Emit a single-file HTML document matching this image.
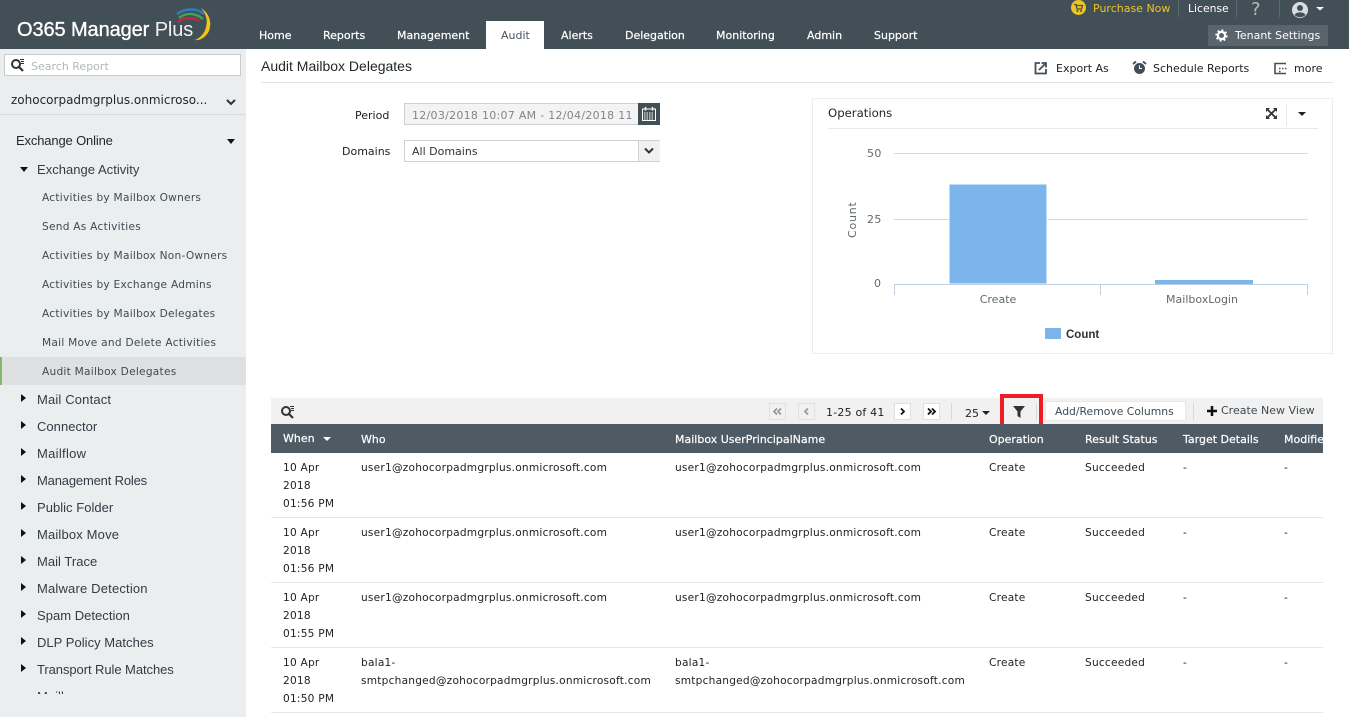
<!DOCTYPE html>
<html><head><meta charset="utf-8"><style>
html,body{margin:0;padding:0;width:1349px;height:717px;overflow:hidden;background:#fff}
body{position:relative;font-family:"DejaVu Sans",sans-serif;font-size:11px;color:#222}
.a,.t{position:absolute;white-space:nowrap}
.t{line-height:14px}
.n{color:#fff;font-size:11px;top:29px;-webkit-text-stroke:.2px #fff}
.s{color:#3f4a52;font-size:10.6px;left:42px;letter-spacing:.25px;margin-top:1px}
.m{font-family:"Liberation Sans",sans-serif;font-size:13px;letter-spacing:.03px;color:#333b44;left:37px;margin-top:1px}
.h{color:#fff;font-size:11px;top:432px;-webkit-text-stroke:.2px #fff;margin-top:1px}
.c{color:#222;font-size:10.6px;letter-spacing:.22px;margin-top:1px}
.l{position:absolute;left:271px;width:1052px;height:1px;background:#e6e8e8}
.ar{position:absolute;left:21px;width:0;height:0;border-left:5px solid #111;border-top:4.5px solid transparent;border-bottom:4.5px solid transparent}
.pg{position:absolute;top:403px;width:15px;height:15px;border:1px solid #e0e0e0;background:#fff}
.pg svg{position:absolute;left:2px;top:2px}
</style></head><body>
<div class="a" style="left:0;top:0;width:1349px;height:49px;background:#434f57"></div>
<div class="t" style="left:17px;top:18px;font-family:'Liberation Sans',sans-serif;font-size:20px;letter-spacing:-.1px;line-height:24px;color:#fff;-webkit-text-stroke:.35px #fff">O365 Manager <span style="-webkit-text-stroke:0;color:#f0f2f2">Plus</span></div>
<svg class="a" style="left:170px;top:5px" width="46" height="38" fill="none">
<path d="M7 9C15 3 27 3 34 9" stroke="#2a7fbb" stroke-width="2.4"/>
<path d="M9 13C16 7 26 8 33 14" stroke="#3ea556" stroke-width="2.4"/>
<path d="M8 17C14 12 23 12 29 16" stroke="#c02a3a" stroke-width="2.4"/>
<path d="M31 3C40 9 42 18 39 26C36 32 30 36 25 35C30 33 35 28 36 22C38 15 36 9 31 3Z" fill="#f0c419"/>
</svg>
<div class="t n" style="left:259px">Home</div>
<div class="t n" style="left:323px">Reports</div>
<div class="t n" style="left:397px">Management</div>
<div class="a" style="left:486px;top:21px;width:58px;height:28px;background:#fff"></div>
<div class="t" style="left:501px;top:29px;color:#4a5660;font-size:11px">Audit</div>
<div class="t n" style="left:561px">Alerts</div>
<div class="t n" style="left:625px">Delegation</div>
<div class="t n" style="left:716px">Monitoring</div>
<div class="t n" style="left:807px">Admin</div>
<div class="t n" style="left:874px">Support</div>
<svg class="a" style="left:1070px;top:0" width="17" height="16"><circle cx="8.5" cy="7.5" r="7.5" fill="#f0c419"/><path d="M4 4.5h2l1 4.5h4.500l1-3.500H6.500" stroke="#434f57" stroke-width="1.300" fill="none"/><circle cx="7.500" cy="11" r="1" fill="#434f57"/><circle cx="11" cy="11" r="1" fill="#434f57"/></svg>
<div class="t" style="left:1093px;top:2px;color:#edc62a;font-size:11px">Purchase Now</div>
<div class="a" style="left:1178px;top:0;width:1px;height:17px;background:#5d6971"></div>
<div class="t" style="left:1188px;top:2px;color:#fff;font-size:10.8px">License</div>
<div class="a" style="left:1236px;top:0;width:1px;height:17px;background:#5d6971"></div>
<div class="t" style="left:1251px;top:3px;color:#b5bbbe;font-size:18px">?</div>
<div class="a" style="left:1279px;top:0;width:1px;height:17px;background:#5d6971"></div>
<svg class="a" style="left:1292px;top:1px" width="34" height="18"><circle cx="8" cy="9" r="8" fill="#d9dcde"/><circle cx="8" cy="7" r="3" fill="#434f57"/><path d="M2.500 14c1.500-3.500 9.500-3.500 11 0a8 8 0 0 1-11 0z" fill="#434f57"/><path d="M24 6h8l-4 3.500z" fill="#fff"/></svg>
<div class="a" style="left:1208px;top:25px;width:120px;height:21px;background:#59646c"></div>
<svg class="a" style="left:1215px;top:29px" width="13" height="13"><circle cx="6.500" cy="6.500" r="3.600" fill="none" stroke="#fff" stroke-width="2.200"/><circle cx="6.500" cy="6.500" r="5.400" fill="none" stroke="#fff" stroke-width="1.500" stroke-dasharray="2 2.200"/></svg>
<div class="t" style="left:1235px;top:29px;color:#fff;font-size:11px">Tenant Settings</div>

<div class="a" style="left:0;top:49px;width:246px;height:668px;background:#ebeeef"></div>
<div class="a" style="left:4px;top:54px;width:235px;height:20px;background:#fff;border:1px solid #c9cccc"></div>
<svg class="a" style="left:10px;top:58px" width="16" height="14" fill="none" stroke="#333"><circle cx="6" cy="6" r="4" stroke-width="2"/><path d="M9 9l4 4" stroke-width="2.200"/><path d="M10 1.500h4M11 3.500h3M11 5.500h3" stroke-width="1"/></svg>
<div class="t" style="left:31px;top:60px;color:#b4b8b9;font-size:11px">Search Report</div>
<div class="t" style="left:11px;top:93px;font-size:12px;color:#1f2529">zohocorpadmgrplus.onmicroso...</div>
<svg class="a" style="left:226px;top:98px" width="10" height="8" fill="none"><path d="M1 2l4 4 4-4" stroke="#333" stroke-width="2"/></svg>
<div class="a" style="left:0;top:114px;width:246px;height:1px;background:#d8dcdd"></div>
<div class="t" style="left:16px;top:134px;font-family:'Liberation Sans',sans-serif;font-size:13px;letter-spacing:-.15px;color:#1f2529">Exchange Online</div>
<div class="a" style="left:227px;top:139px;border-top:5px solid #111;border-left:4.500px solid transparent;border-right:4.500px solid transparent"></div>
<div class="a" style="left:20px;top:167px;border-top:5px solid #111;border-left:4.500px solid transparent;border-right:4.500px solid transparent"></div>
<div class="t m" style="top:162px">Exchange Activity</div>
<div class="t s" style="top:190px">Activities by Mailbox Owners</div>
<div class="t s" style="top:219px">Send As Activities</div>
<div class="t s" style="top:248px">Activities by Mailbox Non-Owners</div>
<div class="t s" style="top:277px">Activities by Exchange Admins</div>
<div class="t s" style="top:306px">Activities by Mailbox Delegates</div>
<div class="t s" style="top:335px">Mail Move and Delete Activities</div>
<div class="a" style="left:0;top:357px;width:246px;height:28px;background:#dfe0e2"></div>
<div class="a" style="left:0;top:357px;width:2px;height:28px;background:#86b865"></div>
<div class="t s" style="top:364px">Audit Mailbox Delegates</div>
<div class="ar" style="top:394px"></div><div class="t m" style="top:392px;letter-spacing:.16px">Mail Contact</div>
<div class="ar" style="top:421px"></div><div class="t m" style="top:419px">Connector</div>
<div class="ar" style="top:448px"></div><div class="t m" style="top:446px;letter-spacing:.3px">Mailflow</div>
<div class="ar" style="top:475px"></div><div class="t m" style="top:473px;letter-spacing:-.17px">Management Roles</div>
<div class="ar" style="top:502px"></div><div class="t m" style="top:500px">Public Folder</div>
<div class="ar" style="top:529px"></div><div class="t m" style="top:527px;letter-spacing:.16px">Mailbox Move</div>
<div class="ar" style="top:556px"></div><div class="t m" style="top:554px">Mail Trace</div>
<div class="ar" style="top:583px"></div><div class="t m" style="top:581px;letter-spacing:.18px">Malware Detection</div>
<div class="ar" style="top:610px"></div><div class="t m" style="top:608px">Spam Detection</div>
<div class="ar" style="top:637px"></div><div class="t m" style="top:635px">DLP Policy Matches</div>
<div class="ar" style="top:664px"></div><div class="t m" style="top:662px;letter-spacing:-.07px">Transport Rule Matches</div>
<div class="a" style="left:0;top:690px;width:246px;height:4px;overflow:hidden"><div class="t m" style="top:-1px">Mailbox</div></div>

<div class="t" style="left:261px;top:59px;font-family:'Liberation Sans',sans-serif;font-size:14px;color:#1f2529">Audit Mailbox Delegates</div>
<div class="a" style="left:261px;top:82px;width:1072px;height:1px;background:#e2e4e4"></div>
<svg class="a" style="left:1034px;top:61px" width="14" height="14" fill="none" stroke="#434f57" stroke-width="1.800"><path d="M6 2H1.500v10.500H12V8"/><path d="M5 9l6-6M7.500 2H12v4.500"/></svg>
<div class="t" style="left:1056px;top:62px">Export As</div>
<svg class="a" style="left:1132px;top:60px" width="16" height="16"><circle cx="7.500" cy="8.500" r="5.500" fill="#434f57"/><path d="M7.500 5.500v3h2.500" stroke="#fff" fill="none"/><path d="M1 4l3-2.500M14 4l-3-2.500" stroke="#434f57" stroke-width="1.800"/></svg>
<div class="t" style="left:1153px;top:62px">Schedule Reports</div>
<svg class="a" style="left:1274px;top:62px" width="14" height="13" fill="none" stroke="#434f57" stroke-width="1.600"><path d="M12 1.500H1v10h11"/><path d="M5 6.500h1.500M8 6.500h1.500M11 6.500h1.500M5 9.500h1.500" /></svg>
<div class="t" style="left:1294px;top:62px">more</div>

<div class="t" style="left:355px;top:109px;font-size:11px">Period</div>
<div class="a" style="left:404px;top:103px;width:234px;height:20px;background:#f3f3f3;border:1px solid #cfd1d1"></div>
<div class="t" style="left:412px;top:109px;color:#80868a;letter-spacing:.28px">12/03/2018 10:07 AM - 12/04/2018 11</div>
<div class="a" style="left:638px;top:103px;width:22px;height:22px;background:#434f57"></div>
<svg class="a" style="left:641px;top:106px" width="16" height="16" fill="none" stroke="#fff"><rect x="1.500" y="3" width="13" height="11.500"/><path d="M4.500 1v3.500M11.500 1v3.500" stroke-width="1.500"/><path d="M3 7h10M3 9h10M3 11h10M3 13h10" stroke-dasharray="1.500 1"/></svg>
<div class="t" style="left:342px;top:145px;font-size:11px">Domains</div>
<div class="a" style="left:404px;top:140px;width:254px;height:20px;background:#fff;border:1px solid #cfd1d1"></div>
<div class="t" style="left:412px;top:145px;color:#333">All Domains</div>
<div class="a" style="left:638px;top:141px;width:21px;height:20px;background:#f1f1f1;border-left:1px solid #cfd1d1"></div>
<svg class="a" style="left:644px;top:147px" width="10" height="8" fill="none"><path d="M1 1.500l4 4 4-4" stroke="#333" stroke-width="2"/></svg>

<div class="a" style="left:812px;top:98px;width:519px;height:254px;border:1px solid #eceeee"></div>
<div class="t" style="left:828px;top:106px;font-size:11.700px;color:#1f2529">Operations</div>
<div class="a" style="left:828px;top:128px;width:490px;height:1px;background:#e8eaea"></div>
<svg class="a" style="left:1265px;top:107px" width="13" height="13" fill="#333"><path d="M1 1h4L1 5zM12 1v4L8 1zM1 12V8l4 4zM12 12H8l4-4z"/><path d="M2 2l9 9M11 2l-9 9" stroke="#333" stroke-width="1.800"/></svg>
<div class="a" style="left:1286px;top:104px;width:1px;height:22px;background:#e6e8e8"></div>
<div class="a" style="left:1298px;top:112px;border-top:4px solid #222;border-left:4px solid transparent;border-right:4px solid transparent"></div>
<svg class="a" style="left:812px;top:130px;overflow:visible" width="520" height="220" font-family="DejaVu Sans" font-size="11" fill="#606a70">
<path d="M82 23.500H496M82 89.500H496" stroke="#d6dadd"/>
<rect x="137" y="54" width="98" height="100" fill="#7cb4ec" stroke="#fff"/>
<rect x="343" y="150" width="98" height="4.500" fill="#7cb4ec"/>
<path d="M82.500 165V154.500H495.500V165M288.500 154.500V165" stroke="#c0d0e0" fill="none"/>
<text x="55" y="27" letter-spacing=".4">50</text><text x="55" y="93" letter-spacing=".4">25</text><text x="62" y="157">0</text>
<text x="186" y="173" text-anchor="middle">Create</text><text x="390" y="173" text-anchor="middle">MailboxLogin</text>
<text transform="translate(44,108) rotate(-90)" letter-spacing=".8">Count</text>
<rect x="233" y="198" width="16" height="11" fill="#7cb4ec"/>
<text x="254" y="208" font-weight="bold" fill="#333" font-family="Liberation Sans" font-size="11.500">Count</text>
</svg>

<div class="a" style="left:271px;top:398px;width:1052px;height:26px;background:#f1f1f1"></div>
<svg class="a" style="left:280px;top:405px" width="16" height="14" fill="none" stroke="#333"><circle cx="6" cy="6" r="4" stroke-width="2"/><path d="M9 9l4 4" stroke-width="2.200"/><path d="M10 1.500h4M11 3.500h3M11 5.500h3" stroke-width="1"/></svg>
<div class="pg" style="left:769px;background:#f1f1f1"><svg width="11" height="11" fill="none" stroke="#999" stroke-width="1.800"><path d="M5 2.500l-3 3 3 3M9 2.500l-3 3 3 3"/></svg></div>
<div class="pg" style="left:798px;background:#f1f1f1"><svg width="11" height="11" fill="none" stroke="#999" stroke-width="1.800"><path d="M7 2.500l-3 3 3 3"/></svg></div>
<div class="t" style="left:826px;top:405px;letter-spacing:.2px;margin-top:1px">1-25 of 41</div>
<div class="pg" style="left:894px"><svg width="11" height="11" fill="none" stroke="#111" stroke-width="1.800"><path d="M4 2.500l3 3-3 3"/></svg></div>
<div class="pg" style="left:923px"><svg width="11" height="11" fill="none" stroke="#111" stroke-width="1.800"><path d="M2 2.500l3 3-3 3M6 2.500l3 3-3 3"/></svg></div>
<div class="a" style="left:951px;top:403px;width:1px;height:17px;background:#d8d8d8"></div>
<div class="t" style="left:965px;top:407px">25</div>
<div class="a" style="left:982px;top:411px;border-top:4px solid #222;border-left:4px solid transparent;border-right:4px solid transparent"></div>
<div class="a" style="left:1000px;top:394px;width:43px;height:39px;box-shadow:inset 0 0 0 4px #ee1c25"></div>
<div class="a" style="left:1036px;top:403px;width:1px;height:17px;background:#d8d8d8"></div>
<svg class="a" style="left:1013px;top:406px" width="12" height="12"><path d="M0 0h12L7.500 5.500V12L4.500 10V5.500z" fill="#333"/></svg>
<div class="a" style="left:1045px;top:401px;width:139px;height:18px;background:#fff;border:1px solid #e8e8e8"></div>
<div class="t" style="left:1055px;top:405px;color:#3f4a52;font-size:10.800px">Add/Remove Columns</div>
<div class="a" style="left:1193px;top:403px;width:1px;height:17px;background:#d8d8d8"></div>
<svg class="a" style="left:1207px;top:406px" width="10" height="10"><path d="M0 5h10M5 0v10" stroke="#111" stroke-width="2.500"/></svg>
<div class="t" style="left:1221px;top:404px;color:#3f4a52;font-size:11px">Create New View</div>

<div class="a" style="left:271px;top:424px;width:1052px;height:29px;background:#4f5b64"></div>
<div class="t h" style="left:283px;top:431px">When</div>
<div class="a" style="left:323px;top:437px;border-top:4px solid #fff;border-left:4px solid transparent;border-right:4px solid transparent"></div>
<div class="t h" style="left:361px">Who</div>
<div class="t h" style="left:675px">Mailbox UserPrincipalName</div>
<div class="t h" style="left:989px">Operation</div>
<div class="t h" style="left:1085px">Result Status</div>
<div class="t h" style="left:1183px">Target Details</div>
<div class="a" style="left:1284px;top:424px;width:39px;height:29px;overflow:hidden"><div class="t h" style="left:0;top:8px">Modified</div></div>

<div class="t c" style="left:283px;top:460px">10 Apr</div><div class="t c" style="left:283px;top:478px">2018</div><div class="t c" style="left:283px;top:496px">01:56 PM</div>
<div class="t c" style="left:361px;top:460px">user1@zohocorpadmgrplus.onmicrosoft.com</div>
<div class="t c" style="left:675px;top:460px">user1@zohocorpadmgrplus.onmicrosoft.com</div>
<div class="t c" style="left:989px;top:460px">Create</div><div class="t c" style="left:1085px;top:460px">Succeeded</div><div class="t c" style="left:1183px;top:460px">-</div><div class="t c" style="left:1284px;top:460px">-</div>
<div class="l" style="top:517px"></div>

<div class="t c" style="left:283px;top:525px">10 Apr</div><div class="t c" style="left:283px;top:543px">2018</div><div class="t c" style="left:283px;top:561px">01:56 PM</div>
<div class="t c" style="left:361px;top:525px">user1@zohocorpadmgrplus.onmicrosoft.com</div>
<div class="t c" style="left:675px;top:525px">user1@zohocorpadmgrplus.onmicrosoft.com</div>
<div class="t c" style="left:989px;top:525px">Create</div><div class="t c" style="left:1085px;top:525px">Succeeded</div><div class="t c" style="left:1183px;top:525px">-</div><div class="t c" style="left:1284px;top:525px">-</div>
<div class="l" style="top:582px"></div>

<div class="t c" style="left:283px;top:590px">10 Apr</div><div class="t c" style="left:283px;top:608px">2018</div><div class="t c" style="left:283px;top:626px">01:55 PM</div>
<div class="t c" style="left:361px;top:590px">user1@zohocorpadmgrplus.onmicrosoft.com</div>
<div class="t c" style="left:675px;top:590px">user1@zohocorpadmgrplus.onmicrosoft.com</div>
<div class="t c" style="left:989px;top:590px">Create</div><div class="t c" style="left:1085px;top:590px">Succeeded</div><div class="t c" style="left:1183px;top:590px">-</div><div class="t c" style="left:1284px;top:590px">-</div>
<div class="l" style="top:647px"></div>

<div class="t c" style="left:283px;top:655px">10 Apr</div><div class="t c" style="left:283px;top:673px">2018</div><div class="t c" style="left:283px;top:691px">01:50 PM</div>
<div class="t c" style="left:361px;top:655px">bala1-</div><div class="t c" style="left:361px;top:673px">smtpchanged@zohocorpadmgrplus.onmicrosoft.com</div>
<div class="t c" style="left:675px;top:655px">bala1-</div><div class="t c" style="left:675px;top:673px">smtpchanged@zohocorpadmgrplus.onmicrosoft.com</div>
<div class="t c" style="left:989px;top:655px">Create</div><div class="t c" style="left:1085px;top:655px">Succeeded</div><div class="t c" style="left:1183px;top:655px">-</div><div class="t c" style="left:1284px;top:655px">-</div>
<div class="l" style="top:712px"></div>
</body></html>
